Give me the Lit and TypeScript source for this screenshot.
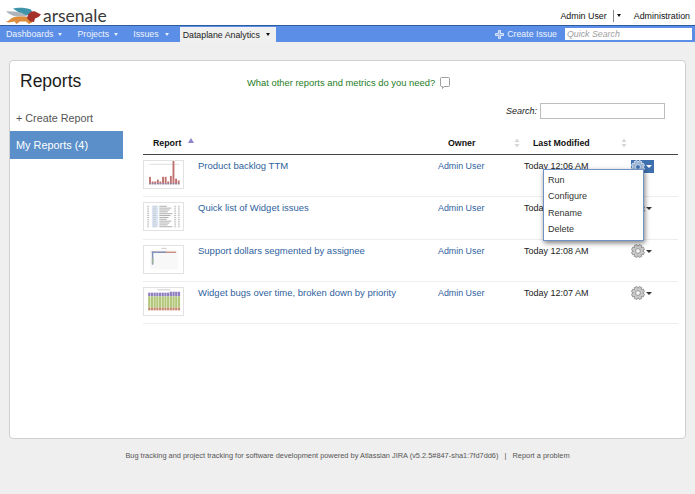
import { LitElement, html, css, svg } from "lit";
import { customElement } from "lit/decorators.js";

function gearPath(cx: number, cy: number, ro: number, ri: number, teeth: number) {
  const pts: string[] = [];
  const step = (Math.PI * 2) / teeth;
  for (let i = 0; i < teeth; i++) {
    const a = i * step + Math.PI / 8;
    const offs: [number, number][] = [
      [-0.5, ri],
      [-0.27, ro],
      [0.27, ro],
      [0.5, ri],
    ];
    for (const [o, r] of offs) {
      const t = a + o * step;
      pts.push(`${(cx + r * Math.cos(t)).toFixed(2)} ${(cy + r * Math.sin(t)).toFixed(2)}`);
    }
  }
  return "M" + pts.join("L") + "Z";
}

const gear = (active: boolean) => html`<svg class="gear" viewBox="0 0 14 14" width="14" height="14">
  <path d=${gearPath(7, 7, 6.6, 4.7, 8)} fill=${active ? "#9fb4d4" : "#c9c9c9"} stroke=${active ? "#dfe8f5" : "#888"} stroke-width="0.8"></path>
  <circle cx="7" cy="7" r="2.4" fill=${active ? "#3f6fae" : "#f4f4f4"} stroke=${active ? "#dfe8f5" : "#888"} stroke-width="0.8"></circle>
</svg>`;

const sortIcon = html`<svg class="sort" viewBox="0 0 6 10" width="6" height="10">
  <path d="M3 0.5L5.5 4H0.5Z M3 9.5L0.5 6H5.5Z" fill="#d6d6d6"></path>
</svg>`;

const thumb1 = [8, 3, 3, 5, 3, 8, 8, 3, 9, 26, 6, 4];
const thumbBars = svg`
  <rect x="5" y="3" width="32" height="1" fill="#ddd"></rect>
  ${thumb1.map((h, i) => svg`<rect x=${5 + i * 2.8} y=${25 - h} width="2" height=${h} fill="#c0706c"></rect>
  <rect x=${5 + i * 2.8} y="24" width="2" height="1" fill="#7b8fc0"></rect>`)}
`;
const thumbList = svg`
  <rect x="8" y="3" width="7" height="23" fill="#dfe9f7"></rect>
  ${[...Array(12).keys()].map((i) => svg`
    <rect x="3" y=${3 + i * 2} width="2" height="1" fill="#bbb"></rect>
    <rect x="9" y=${3 + i * 2} width="4" height="1" fill="#c4c9d2"></rect>
    <rect x="16" y=${3 + i * 2} width=${8 + ((i * 5) % 7)} height="1" fill="#aaa"></rect>
    <rect x="32" y=${3 + i * 2} width="2" height="1" fill="#bbb"></rect>
    <rect x="36" y=${3 + i * 2} width="2" height="1" fill="#bbb"></rect>`)}
`;
const thumbFlat = svg`
  <rect x="6" y="4" width="30" height="21" fill="#f8f8f8"></rect>
  <rect x="18" y="2" width="6" height="1" fill="#ccc"></rect>
  <rect x="8" y="6" width="26" height="1.5" fill="#c98f80"></rect>
  <rect x="8" y="6" width="15" height="1.5" fill="#7f93bd"></rect>
  <rect x="8" y="6" width="1.6" height="14" fill="#7f93bd"></rect>
  <rect x="8" y="13" width="1.6" height="6" fill="#9fb097"></rect>
`;
const stack = [0, 1, 2, 3, 4, 5, 6, 7, 8, 9, 10, 11];
const thumbStack = svg`
  <rect x="14" y="1.5" width="14" height="1" fill="#ccc"></rect>
  ${stack.map((i) => {
    const top = 5 - (i > 7 ? 1 : 0);
    return svg`<rect x=${4 + i * 2.9} y=${top} width="2.4" height=${9 - top} fill="#8f7fc0"></rect>
    <rect x=${4 + i * 2.9} y="9" width="2.4" height="12" fill="#b3c77a"></rect>
    <rect x=${4 + i * 2.9} y="21" width="2.4" height="3" fill="#c58a72"></rect>`;
  })}
`;

const rows = [
  { title: "Product backlog TTM", time: "Today 12:06 AM", art: thumbBars, active: true },
  { title: "Quick list of Widget issues", time: "Today 12:07 AM", art: thumbList, active: false },
  { title: "Support dollars segmented by assignee", time: "Today 12:08 AM", art: thumbFlat, active: false },
  { title: "Widget bugs over time, broken down by priority", time: "Today 12:07 AM", art: thumbStack, active: false },
];

@customElement("app-root")
export class AppRoot extends LitElement {
  static styles = css`
    :host {
      display: flex;
      flex-direction: column;
      height: 494px;
      width: 695px;
      overflow: hidden;
      background: #efefef;
      font-family: "Liberation Sans", Arial, sans-serif;
      font-size: 9px;
      color: #222;
    }
    a { color: inherit; text-decoration: none; }

    .top { height: 25px; background: #fff; display: flex; align-items: flex-start; }
    .logo { margin: 6px 0 0 5px; width: 36px; height: 18px; flex: none; }
    .brand {
      font-family: "Lato", sans-serif;
      font-size: 17.5px;
      line-height: 20px;
      margin: 6px 0 0 2px;
      color: #3a3a3a;
      font-weight: 400;
    }
    .user {
      margin-left: auto;
      display: flex;
      align-items: center;
      height: 15px;
      margin-top: 8px;
      font-size: 8.9px;
      color: #111;
      padding-right: 5px;
    }
    .user .sep { width: 1px; height: 12px; background: #888; margin: 0 3px 0 6px; }
    .user .caret { margin-right: 13px; }
    .caret {
      width: 0; height: 0;
      border-left: 2.5px solid transparent;
      border-right: 2.5px solid transparent;
      border-top: 3px solid #111;
      display: inline-block;
      flex: none;
    }
    .caret.light { border-top-color: #e8f0fb; }

    .nav {
      height: 16px;
      background: #5b8ee6;
      border-top: 1px solid #2e5c9e;
      display: flex;
      align-items: stretch;
      color: #eef4fd;
      font-size: 8.8px;
      white-space: nowrap;
    }
    .nav .item { display: flex; align-items: center; gap: 5px; padding-right: 15px; }
    .nav .item:first-child { padding-left: 6px; }
    .nav .item:nth-child(3) { padding-right: 11px; gap: 6px; }
    .nav .cur {
      background: #f0f0f0;
      color: #222;
      display: flex;
      align-items: center;
      justify-content: space-between;
      padding: 0 6px 0 3px;
      width: 96px;
      box-sizing: border-box;
      margin-top: 1px;
    }
    .nav .right { margin-left: auto; display: flex; align-items: center; }
    .create { display: flex; align-items: center; gap: 3px; margin-right: 8px; }
    .qs {
      width: 127px;
      height: 12px;
      background: #fff;
      margin-right: 3px;
      padding-left: 2px;
      box-sizing: border-box;
      font-style: italic;
      color: #a0a0a0;
      line-height: 12px;
      font-size: 8.8px;
    }

    .page { padding: 18px 9px 0 9px; flex: none; }
    .card {
      height: 379px;
      box-sizing: border-box;
      background: #fff;
      border: 1px solid #cfcfcf;
      border-radius: 4px;
      display: grid;
      grid-template-columns: 113px 1fr;
    }
    .side { display: flex; flex-direction: column; }
    h1 {
      margin: 0;
      font-weight: 400;
      font-size: 17.5px;
      line-height: 20px;
      padding: 10px 0 0 10px;
      color: #1c1c1c;
    }
    .new {
      margin: 20px 0 0 6px;
      font-size: 10.8px;
      line-height: 14px;
      color: #555;
    }
    .tab {
      margin-top: 6px;
      height: 28px;
      background: #5b8fc9;
      color: #fff;
      font-size: 10.9px;
      line-height: 28px;
      padding-left: 6px;
      box-sizing: border-box;
      width: 113px;
    }

    .main { padding: 0 7px 0 20px; position: relative; display: flex; flex-direction: column; }
    .ask {
      margin-top: 15px;
      margin-left: 104px;
      color: #1e7d1e;
      font-size: 9.4px;
      line-height: 14px;
      display: flex;
      align-items: center;
      gap: 5px;
    }
    .find {
      margin-top: 13px;
      display: flex;
      justify-content: flex-end;
      align-items: center;
      gap: 3px;
      padding-right: 13px;
      font-style: italic;
      font-size: 9px;
      color: #222;
    }
    .find .box {
      width: 125px;
      height: 16px;
      box-sizing: border-box;
      background: #fff;
      border: 1px solid #bdbdbd;
    }

    .row {
      display: grid;
      grid-template-columns: 55px 240px 86px 105px 1fr;
      box-sizing: border-box;
    }
    .head {
      margin-top: 15px;
      height: 21px;
      padding-bottom: 2px;
      border-bottom: 1px solid #444;
      font-weight: 700;
      font-size: 8.8px;
      color: #111;
      align-items: center;
    }
    .head > div { display: flex; align-items: center; }
    .head .col-report { padding-left: 10px; gap: 7px; grid-column: span 2; }
    .head .col-owner { padding-left: 10px; gap: 39px; }
    .head .col-mod { padding-left: 9px; gap: 31px; }
    .up {
      width: 0; height: 0;
      border-left: 3px solid transparent;
      border-right: 3px solid transparent;
      border-bottom: 5px solid #8b84c9;
      margin-top: -6px;
    }

    .body-row {
      height: 42.3px;
      border-bottom: 1px solid #eeeeee;
      padding-top: 5px;
    }
    .thumb { width: 41px; height: 29px; display: block; border: 1px solid #e2e2e2; box-sizing: border-box; background: #fff; }
    .title { color: #2f5f9e; font-size: 9.5px; line-height: 11px; }
    .owner { color: #2f5f9e; font-size: 8.9px; line-height: 13px; }
    .time { color: #222; font-size: 9px; line-height: 13px; }
    .actions { line-height: 0; padding-left: 1px; }
    .btn {
      display: inline-flex;
      align-items: center;
      gap: 1px;
      height: 13px;
      padding: 0 2px 0 0;
      margin-left: 1px;
    }
    .btn.on { background: #3f6fae; }
    .gear { display: block; }
    .btn .caret { border-top-color: #333; border-left-width: 3px; border-right-width: 3px; }
    .btn.on .caret { border-top-color: #fff; }

    .menu {
      position: absolute;
      left: 420px;
      top: 108px;
      width: 101px;
      height: 72px;
      box-sizing: border-box;
      background: #fff;
      border: 1px solid #6f93c4;
      box-shadow: 1px 2px 5px rgba(0, 0, 0, 0.5);
      padding: 2px 0 0 4px;
      font-size: 9px;
      line-height: 16.4px;
      color: #333;
    }

    .foot {
      margin-top: 11px;
      text-align: center;
      font-size: 7.4px;
      line-height: 12px;
      color: #555;
    }
    .foot .bar { margin: 0 4px; }
  `;

  render() {
    return html`
      <div class="top">
        <svg class="logo" viewBox="0 0 36 18">
          <path d="M8 2.5C13 1 21 1.5 26 3.5L28 8L21 9.5C17 8 12 6 8 2.5Z" fill="#3f93ab"></path>
          <path d="M1 5.5C7 5 13 6 17 7L23 10.5L11 10.5C7 9.5 4 8 1 5.5Z" fill="#aeb6bb"></path>
          <path d="M1 15.5C4 15.5 5 12.5 8 11.5C13 10 21 10 27 12L27 16.5L24 18L21 15.5L15 15.5L11.5 18L9.5 15.5C6.5 15.5 4 17.5 1 15.5Z" fill="#dc8e3e"></path>
          <path d="M23 9C25 5 29 4 32 6.5L36 8.5L33.5 11L30 12.5L29 16L25 15.5L22 12Z" fill="#a6302a"></path>
        </svg>
        <div class="brand">arsenale</div>
        <div class="user">
          <span>Admin User</span><span class="sep"></span><span class="caret"></span>
          <span>Administration</span>
        </div>
      </div>
      <nav class="nav">
        <div class="item">Dashboards <span class="caret light"></span></div>
        <div class="item">Projects <span class="caret light"></span></div>
        <div class="item">Issues <span class="caret light"></span></div>
        <div class="cur">Dataplane Analytics <span class="caret"></span></div>
        <div class="right">
          <div class="create">
            <svg viewBox="0 0 9 9" width="9" height="9"><path d="M3.5 .5h2v3h3v2h-3v3h-2v-3h-3v-2h3z" fill="#9db9ea" stroke="#eef4fd" stroke-width=".8"></path></svg>
            Create Issue
          </div>
          <div class="qs">Quick Search</div>
        </div>
      </nav>
      <div class="page">
        <div class="card">
          <div class="side">
            <h1>Reports</h1>
            <a class="new">+ Create Report</a>
            <div class="tab">My Reports (4)</div>
          </div>
          <div class="main">
            <div class="ask">
              <span>What other reports and metrics do you need?</span>
              <svg viewBox="0 0 10 12" width="10" height="12"><path d="M1.5 .5h7a1 1 0 0 1 1 1v7a1 1 0 0 1-1 1h-4.5l-1.5 2v-2h-1a1 1 0 0 1-1-1v-7a1 1 0 0 1 1-1z" fill="#fff" stroke="#888" stroke-width=".8"></path></svg>
            </div>
            <div class="find"><span>Search:</span><div class="box"></div></div>
            <div class="row head">
              <div class="col-report"><span>Report</span><span class="up"></span></div>
              <div class="col-owner"><span>Owner</span>${sortIcon}</div>
              <div class="col-mod"><span>Last Modified</span>${sortIcon}</div>
              <div></div>
            </div>
            ${rows.map(
              (r) => html`<div class="row body-row">
                <svg class="thumb" viewBox="0 0 41 29">${r.art}</svg>
                <a class="title">${r.title}</a>
                <a class="owner">Admin User</a>
                <div class="time">${r.time}</div>
                <div class="actions"><span class="btn ${r.active ? "on" : ""}">${gear(r.active)}<span class="caret"></span></span></div>
              </div>`
            )}
            <div class="menu">
              <div>Run</div>
              <div>Configure</div>
              <div>Rename</div>
              <div>Delete</div>
            </div>
          </div>
        </div>
        <div class="foot">Bug tracking and project tracking for software development powered by Atlassian JIRA (v5.2.5#847-sha1:7fd7dd6)<span class="bar">&nbsp;|&nbsp;</span>Report a problem</div>
      </div>
    `;
  }
}
